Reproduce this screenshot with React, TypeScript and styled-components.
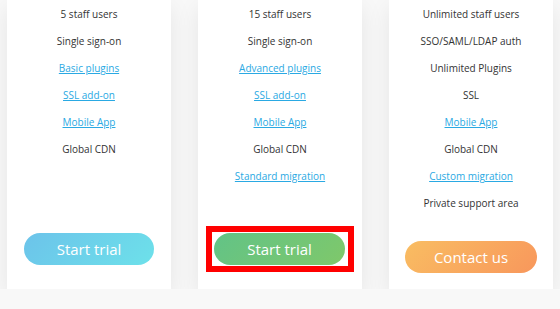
import React, { FC } from 'react';
import styled, { createGlobalStyle, css } from 'styled-components';

const GlobalStyle = createGlobalStyle`
  html, body {
    margin: 0;
    padding: 0;
    background: #f8f8f8;
    font-family: 'Open Sans', 'Liberation Sans', sans-serif;
    overflow: hidden;
  }
`;

const Pricing = styled.div`
  display: flex;
  gap: 27px;
  padding-left: 7px;
  align-items: stretch;
`;

const Card = styled.div<{ $padBottom: number }>`
  width: 164px;
  height: 289px;
  box-sizing: border-box;
  padding-top: 1px;
  background: #fff;
  box-shadow: 0 8px 22px rgba(0, 0, 0, 0.08);
  display: flex;
  flex-direction: column;
  align-items: center;
  padding-bottom: ${(p) => p.$padBottom}px;
`;

const FeatureList = styled.ul`
  list-style: none;
  margin: 0;
  padding: 0;
  width: 100%;
  text-align: center;
`;

const Feature = styled.li`
  height: 27px;
  line-height: 27px;
  font-size: 10px;
  color: #333;
`;

const FeatureLink = styled.a`
  color: #2aa9e3;
  text-decoration: underline;
  cursor: pointer;
`;

type Tone = 'blue' | 'green' | 'orange';

const gradients: Record<Tone, string> = {
  blue: 'linear-gradient(135deg, #6cc3ea 0%, #6de1ea 100%)',
  green: 'linear-gradient(135deg, #62c387 0%, #7fc86a 100%)',
  orange: 'linear-gradient(135deg, #f9bd62 0%, #f8975c 100%)',
};

const CtaButton = styled.button<{ $tone: Tone; $w: number }>`
  width: ${(p) => p.$w}px;
  height: 32px;
  border: none;
  border-radius: 16px;
  background: ${(p) => gradients[p.$tone]};
  color: #fff;
  font-family: 'Open Sans', 'Liberation Sans', sans-serif;
  font-size: 15px;
  padding: 0;
  cursor: pointer;
  display: block;
`;

const Highlight = styled.div<{ $on?: boolean }>`
  margin-top: auto;
  ${(p) =>
    p.$on &&
    css`
      border: 6px solid #ff0000;
      padding: 1px 3px 1px 2px;
      margin-bottom: -7px;
    `}
`;

type Item = { text: string; link?: boolean };

type Plan = {
  features: Item[];
  cta: string;
  tone: Tone;
  width: number;
  padBottom: number;
  highlighted?: boolean;
};

const plans: Plan[] = [
  {
    features: [
      { text: '5 staff users' },
      { text: 'Single sign-on' },
      { text: 'Basic plugins', link: true },
      { text: 'SSL add-on', link: true },
      { text: 'Mobile App', link: true },
      { text: 'Global CDN' },
    ],
    cta: 'Start trial',
    tone: 'blue',
    width: 130,
    padBottom: 24,
  },
  {
    features: [
      { text: '15 staff users' },
      { text: 'Single sign-on' },
      { text: 'Advanced plugins', link: true },
      { text: 'SSL add-on', link: true },
      { text: 'Mobile App', link: true },
      { text: 'Global CDN' },
      { text: 'Standard migration', link: true },
    ],
    cta: 'Start trial',
    tone: 'green',
    width: 131,
    padBottom: 24,
    highlighted: true,
  },
  {
    features: [
      { text: 'Unlimited staff users' },
      { text: 'SSO/SAML/LDAP auth' },
      { text: 'Unlimited Plugins' },
      { text: 'SSL' },
      { text: 'Mobile App', link: true },
      { text: 'Global CDN' },
      { text: 'Custom migration', link: true },
      { text: 'Private support area' },
    ],
    cta: 'Contact us',
    tone: 'orange',
    width: 132,
    padBottom: 16,
  },
];

const App: FC = () => {
  return (
    <>
      <GlobalStyle />
      <Pricing>
        {plans.map((plan, i) => (
          <Card key={i} $padBottom={plan.padBottom}>
            <FeatureList>
              {plan.features.map((f, j) => (
                <Feature key={j}>
                  {f.link ? <FeatureLink>{f.text}</FeatureLink> : f.text}
                </Feature>
              ))}
            </FeatureList>
            <Highlight $on={plan.highlighted}>
              <CtaButton $tone={plan.tone} $w={plan.width}>
                {plan.cta}
              </CtaButton>
            </Highlight>
          </Card>
        ))}
      </Pricing>
    </>
  );
};

export default App;
